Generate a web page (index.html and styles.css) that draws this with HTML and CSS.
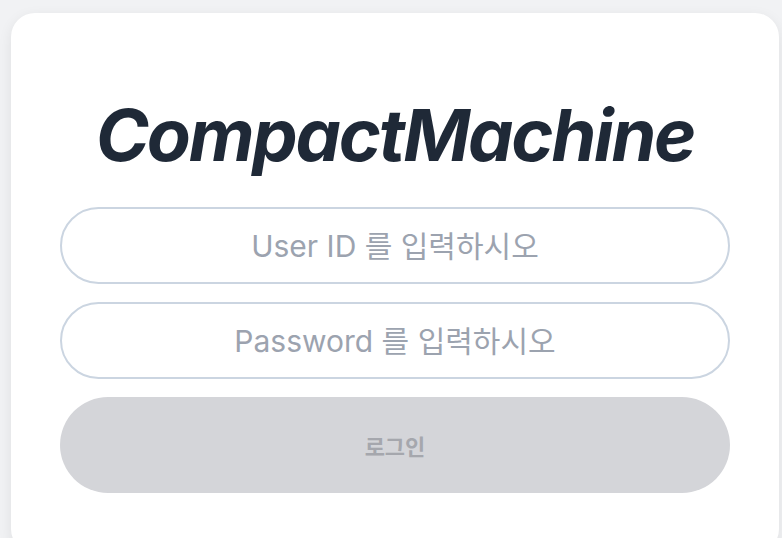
FILE: index.html
```html
<!DOCTYPE html>
<html lang="ko">
<head>
<meta charset="utf-8">
<title>CompactMachine</title>
<link rel="stylesheet" href="styles.css">
</head>
<body>
<main class="card">
  <h1 class="title">CompactMachine</h1>
  <form class="form">
    <input class="field" type="text" placeholder="User ID 를 입력하시오">
    <input class="field" type="password" placeholder="Password 를 입력하시오">
    <button class="login" type="button" disabled>로그인</button>
  </form>
</main>
</body>
</html>
```

FILE: styles.css
```css
html, body {
  margin: 0;
  padding: 0;
}
body {
  background: #f1f2f4;
  font-family: Inter, "Noto Sans CJK KR", sans-serif;
  overflow: hidden;
}
.card {
  box-sizing: border-box;
  width: 768px;
  margin: 13px 0 0 11px;
  padding: 86px 49px 60px;
  background: #ffffff;
  border-radius: 24px;
  box-shadow: 0 4px 14px rgba(0, 0, 0, 0.08);
}
.title {
  margin: 0 0 36px;
  font-size: 72px;
  line-height: 72px;
  font-weight: 700;
  font-style: italic;
  text-align: center;
  color: #1f2937;
  letter-spacing: -2.2px;
}
.form {
  display: flex;
  flex-direction: column;
  gap: 18px;
}
.field {
  box-sizing: border-box;
  width: 100%;
  height: 77px;
  border: 2px solid #cbd5e1;
  border-radius: 999px;
  background: #fff;
  font-family: Inter, "Noto Sans CJK KR", sans-serif;
  font-size: 30px;
  text-align: center;
  color: #374151;
  outline: none;
}
.field::placeholder {
  color: #9ca3af;
}
.login {
  height: 96px;
  border: none;
  border-radius: 999px;
  background: #d4d5d9;
  color: #a5a7ad;
  font-family: Inter, "Noto Sans CJK KR", sans-serif;
  font-size: 22px;
  font-weight: 700;
}
```
